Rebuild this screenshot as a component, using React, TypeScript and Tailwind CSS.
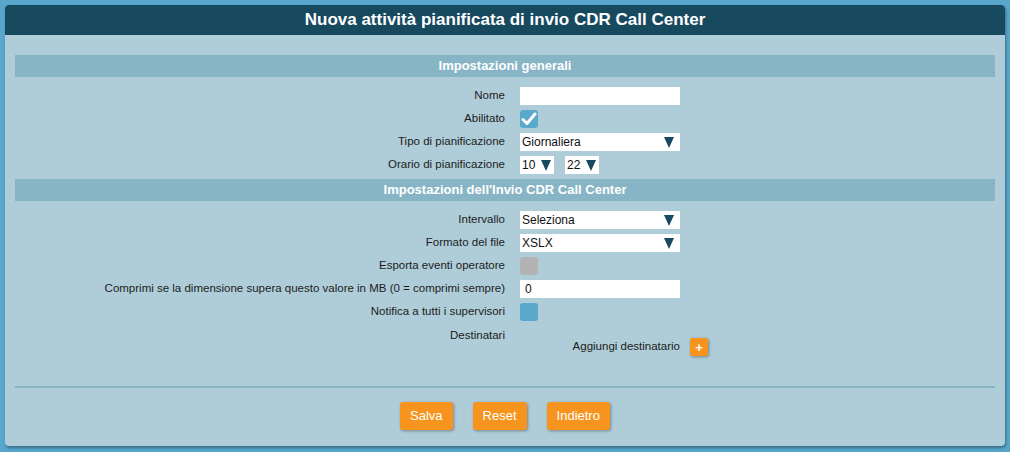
import React from "react"

const font = { fontFamily: '"Liberation Sans", Arial, sans-serif' }

function Triangle() {
  return (
    <svg width="10" height="11" viewBox="0 0 10 11" className="shrink-0">
      <path d="M0 0H10L5 11Z" fill="#174a5f" />
    </svg>
  )
}

function Select({ value, small }: { value: string; small?: boolean }) {
  return (
    <div
      className={`flex h-[18px] items-center justify-between bg-white pl-[2px] ${
        small ? "w-[34px] pr-[3px]" : "w-[160px] pr-[6px]"
      }`}
    >
      <span className="text-[12px] text-[#111]">{value}</span>
      <Triangle />
    </div>
  )
}

function Check({ checked, color }: { checked?: boolean; color: string }) {
  return (
    <div
      className="flex h-[18px] w-[18px] items-center justify-center rounded-[3px]"
      style={{ backgroundColor: color }}
    >
      {checked && (
        <svg width="16" height="14" viewBox="0 0 16 14">
          <path d="M2 7.5L6 11.5L14 2" fill="none" stroke="white" strokeWidth="3" strokeLinecap="round" strokeLinejoin="round" />
        </svg>
      )}
    </div>
  )
}

function Row({ label, children }: { label: string; children?: React.ReactNode }) {
  return (
    <div className="grid h-[18px] grid-cols-2 items-center">
      <div className="text-right text-[11.5px] text-[#1c1c1c]">{label}</div>
      <div className="flex items-center gap-[11px] pl-[15px]">{children}</div>
    </div>
  )
}

function SectionHeader({ title }: { title: string }) {
  return (
    <div className="flex h-[22px] items-center justify-center bg-[#87b5c6] text-[13px] font-bold text-white">
      {title}
    </div>
  )
}

export default function App() {
  return (
    <div className="h-[452px] w-[1010px] bg-[#58a6cc] p-[5px]" style={font}>
      <div className="h-[441px] overflow-hidden rounded-[4px] bg-[#afcdd8] shadow-[1px_2px_3px_rgba(0,0,0,0.35)]">
        <div className="flex h-[30px] items-center justify-center bg-[#174a5f] text-[17px] font-bold text-white">
          Nuova attività pianificata di invio CDR Call Center
        </div>

        <div className="px-[10px] pt-[20px]">
          <SectionHeader title="Impostazioni generali" />
          <div className="flex flex-col gap-[5px] pt-[10px]">
            <Row label="Nome">
              <div className="h-[18px] w-[160px] bg-white" />
            </Row>
            <Row label="Abilitato">
              <Check checked color="#5aa9cc" />
            </Row>
            <Row label="Tipo di pianificazione">
              <Select value="Giornaliera" />
            </Row>
            <Row label="Orario di pianificazione">
              <Select value="10" small />
              <Select value="22" small />
            </Row>
          </div>

          <div className="pt-[5px]">
            <SectionHeader title="Impostazioni dell'Invio CDR Call Center" />
          </div>
          <div className="flex flex-col gap-[5px] pt-[10px]">
            <Row label="Intervallo">
              <Select value="Seleziona" />
            </Row>
            <Row label="Formato del file">
              <Select value="XSLX" />
            </Row>
            <Row label="Esporta eventi operatore">
              <Check color="#b3b3b3" />
            </Row>
            <Row label="Comprimi se la dimensione supera questo valore in MB (0 = comprimi sempre)">
              <div className="flex h-[18px] w-[160px] items-center bg-white pl-[5px] text-[12px] text-[#111]">0</div>
            </Row>
            <Row label="Notifica a tutti i supervisori">
              <Check color="#5aa9cc" />
            </Row>
          </div>

          <div className="grid grid-cols-2 pt-[5px]">
            <div className="text-right text-[11.5px] leading-[18px] text-[#1c1c1c]">Destinatari</div>
            <div className="flex items-center pl-[15px] pt-[12px]">
              <div className="w-[160px] text-right text-[11.5px] text-[#1c1c1c]">Aggiungi destinatario</div>
              <div className="ml-[10px] flex h-[18px] w-[18px] items-center justify-center rounded-[2px] bg-[#f7941d] text-[13px] font-bold leading-none text-white shadow-[1px_1px_3px_rgba(0,0,0,0.35)]">
                +
              </div>
            </div>
          </div>

          <div className="mt-[30px] h-[2px] bg-[#86b4c5]" />

          <div className="flex justify-center gap-[20px] pt-[14px]">
            {["Salva", "Reset", "Indietro"].map((b) => (
              <button
                key={b}
                className="h-[28px] rounded-[3px] bg-[#f7941d] px-[10px] text-[13px] text-white shadow-[1px_1px_3px_rgba(0,0,0,0.35)]"
              >
                {b}
              </button>
            ))}
          </div>
        </div>
      </div>
    </div>
  )
}
